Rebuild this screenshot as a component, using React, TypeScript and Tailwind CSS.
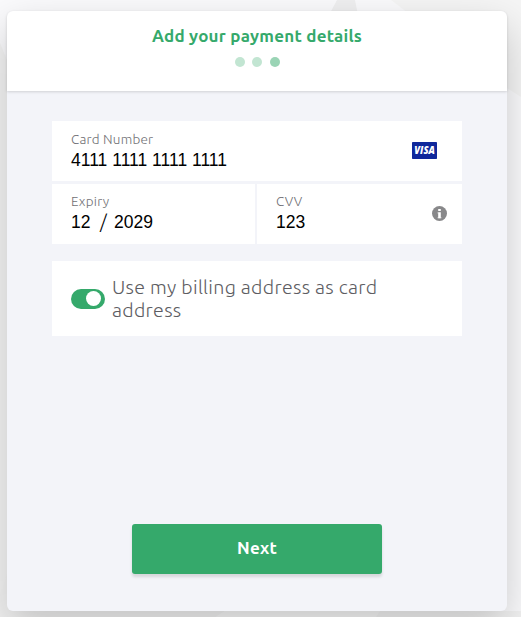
import React from "react";

const humanist = "font-['Ubuntu','Open_Sans','Noto_Sans',sans-serif]";
const numeric = "font-['Liberation_Sans',Arial,sans-serif]";

function Field({ label, children, icon, raised = false }: { label: string; children: React.ReactNode; icon?: React.ReactNode; raised?: boolean }) {
  return (
    <div className="flex h-[60px] items-center justify-between bg-white pl-[19px]">
      <div className={raised ? "flex flex-col pb-[4px]" : "flex flex-col pb-[2px]"}>
        <span className="h-[19px] whitespace-nowrap text-[13.5px] font-light leading-[19px] tracking-[0.22px] text-[#707074]">{label}</span>
        <div className={`flex h-[22px] items-center whitespace-pre text-[17.5px] leading-[22px] text-black ${numeric}`}>{children}</div>
      </div>
      {icon}
    </div>
  );
}

function Visa() {
  return (
    <svg className="mb-[2px] mr-[25px] h-[17px] w-[25px]" viewBox="0 0 25 17" aria-label="Visa">
      <rect width="25" height="17" rx="0.7" fill="#10289b" />
      <text x="2.3" y="12" textLength="20.6" lengthAdjust="spacingAndGlyphs" fill="white" fontFamily="Open Sans, sans-serif" fontSize="10" fontWeight="800" fontStyle="italic">VISA</text>
    </svg>
  );
}

function Info() {
  return (
    <svg className="mb-[1px] mr-[15px] h-[15px] w-[15px]" viewBox="0 0 15 15">
      <circle cx="7.5" cy="7.5" r="7.5" fill="#88888a" />
      <path d="M6.2 2.9h2.6v2.2H6.2zM6.2 6.3h2.6v5.9H6.2z" fill="white" />
      <path d="M5.4 6.3h1.2v1.2H5.4zM5.4 11.2h4.2v1H5.4z" fill="white" fillOpacity="0.5" />
    </svg>
  );
}

function Backdrop() {
  return (
    <svg className="absolute inset-0 h-full w-full" viewBox="0 0 521 617" preserveAspectRatio="none">
      <path d="M0 43L7 60V617H0z" fill="#f4f4f4" />
      <path d="M337 0H355L358 15H329z" fill="#efeff0" />
      <path d="M391 0H521V97L507 88L408 13z" fill="#f5f5f5" />
      <path d="M0 595L12 560V611H225L216 617H0z" fill="#f2f2f2" />
      <path d="M225 611H380L376 617H216z" fill="#f7f7f7" />
      <path d="M380 611H521V617H376z" fill="#f2f2f2" />
    </svg>
  );
}

export default function App() {
  return (
    <div className={`relative h-[617px] w-[521px] overflow-hidden bg-[#fafafc] pl-[7px] pt-[11px] ${humanist}`}>
      <Backdrop />
      <main className="relative flex h-[600px] w-[500px] flex-col rounded-[6px] bg-[#f3f4f9] shadow-[0_16px_40px_rgba(0,0,0,0.2)]">
        <header className="flex h-20 shrink-0 flex-col items-center rounded-t-[6px] bg-white pt-[13px] shadow-[0_1px_3px_rgba(0,0,0,0.15)]">
          <h1 className="h-[24px] whitespace-nowrap text-[17px] font-semibold leading-[24px] tracking-[0.24px] text-[#35a96b]">Add your payment details</h1>
          <div className="mt-[9px] flex gap-[7.5px]">
            <i className="h-[10px] w-[10px] rounded-full bg-[#c2e5d2]" />
            <i className="h-[10px] w-[10px] rounded-full bg-[#c2e5d2]" />
            <i className="h-[10px] w-[10px] rounded-full bg-[#9ad4b5]" />
          </div>
        </header>
        <section className="mx-auto mt-[30px] w-[410px]">
          <Field label="Card Number" icon={<Visa />}>4111 1111 1111 1111</Field>
          <div className="mt-[3px] grid grid-cols-[203px_205px] gap-[2px]">
            <Field label="Expiry" raised>
              <span className="w-[29px]">12</span><span className={`w-[14px] pt-[1px] text-[19px] font-light ${humanist}`}>/</span><span>2029</span>
            </Field>
            <Field label="CVV" icon={<Info />} raised>123</Field>
          </div>
          <label className="mt-[17px] flex h-[75px] items-center bg-white pl-[19px]">
            <span className="flex h-5 w-[34px] shrink-0 items-center justify-end rounded-full bg-[#35a96b] pr-[4px]">
              <span className="h-[15.5px] w-[15.5px] rounded-full bg-white" />
            </span>
            <span className="ml-[7px] w-[300px] text-[19.6px] font-light leading-[23px] tracking-[0.3px] text-[#5d5d62]">Use my billing address as card<br />address</span>
          </label>
        </section>
        <button className="mx-auto mb-[37px] mt-auto h-[50px] w-[250px] rounded-[3px] bg-[#35a96b] pb-[2px] text-[17px] font-semibold tracking-[0.24px] text-white shadow-[0_3px_3px_rgba(0,0,0,0.12)]">Next</button>
      </main>
    </div>
  );
}
